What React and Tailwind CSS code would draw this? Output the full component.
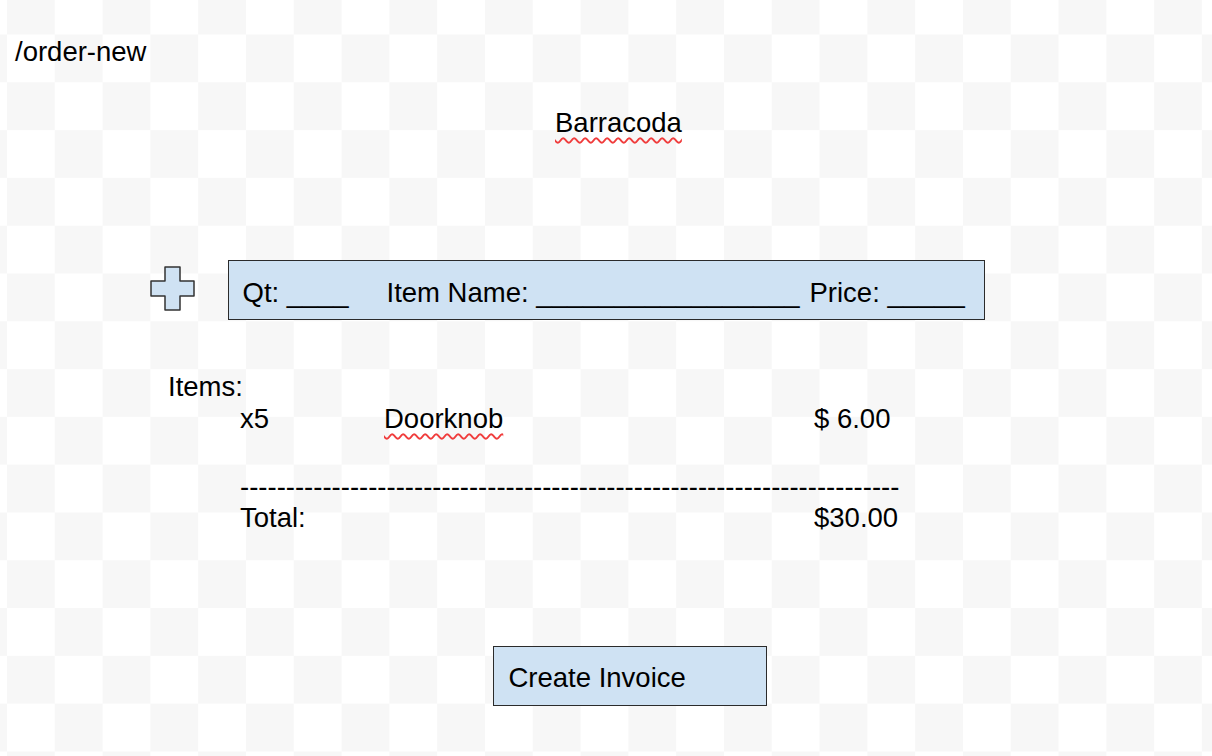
import React from "react";

const checker =
  "[background-image:repeating-conic-gradient(#f7f7f7_0_25%,#ffffff_0_50%)] [background-size:95.6px_95.6px] [background-position:7px_34.5px]";

const PlusIcon = () => (
  <svg width="45" height="45" viewBox="0 0 45 45" className="block">
    <path
      d="M15 1 H30 V15 H44 V30 H30 V44 H15 V30 H1 V15 H15 Z"
      fill="#cfe2f3"
      stroke="#333333"
      strokeWidth="1.5"
      strokeLinejoin="round"
    />
  </svg>
);

const items = [{ qty: 5, name: "Doorknob", price: 6 }];

const squiggle =
  "underline decoration-wavy decoration-[#f03c3c] decoration-[1.5px] underline-offset-[5px]";

const App = () => {
  const total = items.reduce((sum, i) => sum + i.qty * i.price, 0);

  return (
    <div
      className={`w-full h-[756px] overflow-hidden text-black text-[27.5px] leading-[31px] ${checker}`}
      style={{ fontFamily: '"Liberation Sans", Arial, sans-serif' }}
    >
      <div className="pt-[36px] pl-[15px]">/order-new</div>

      <div className="mt-[40px] pl-[555px]">
        <span className={squiggle}>Barracoda</span>
      </div>

      {/* add item row */}
      <div className="mt-[122px] flex pl-[150px]">
        <div className="mt-[6px]">
          <PlusIcon />
        </div>
        <div className="ml-[33px] w-[757px] h-[60px] flex items-center pt-[4px] pl-[13.5px] bg-[#cfe2f3] border-[1.5px] border-[#2b2b2b] whitespace-pre">
          <span className="w-[144px]">
            Qt: <span className="tracking-[0.2px]">____</span>
          </span>
          <span className="w-[423px]">
            Item Name: <span className="tracking-[0.2px]">_________________</span>
          </span>
          <span>
            Price: <span className="tracking-[0.2px]">_____</span>
          </span>
        </div>
      </div>

      {/* item list */}
      <div className="mt-[51px] pl-[168px]">Items:</div>
      {items.map((item) => (
        <div key={item.name} className="mt-[1px] flex pl-[240px]">
          <span className="w-[144px]">x{item.qty}</span>
          <span className="w-[430px]">
            <span className={squiggle}>{item.name}</span>
          </span>
          <span>$ {item.price.toFixed(2)}</span>
        </div>
      ))}
      <div className="mt-[37px] pl-[240px] whitespace-pre">
        {"-".repeat(72)}
      </div>
      <div className="flex pl-[240px]">
        <span className="w-[574px]">Total:</span>
        <span>${total.toFixed(2)}</span>
      </div>

      <div className="mt-[113px] pl-[493px]">
        <button className="w-[274px] h-[60px] flex items-center pt-[3px] pl-[14.5px] bg-[#cfe2f3] border-[1.5px] border-[#2b2b2b] text-left">
          Create Invoice
        </button>
      </div>
    </div>
  );
};

export default App;
